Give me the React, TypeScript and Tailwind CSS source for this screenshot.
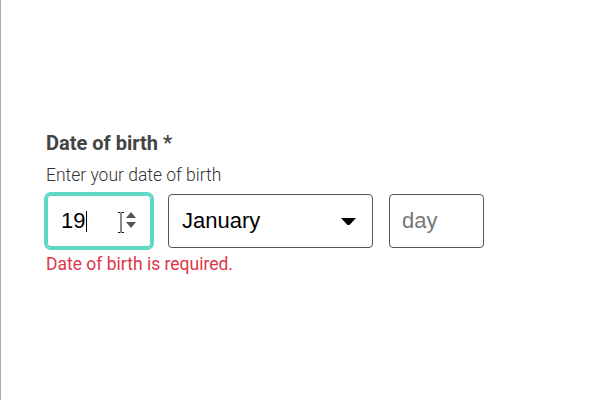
export default function App() {
  return (
    <div className="h-[400px] w-[599px] overflow-hidden border-l border-[#a8a8a8] bg-white">
      <div className="px-[45px] pt-[131px]" style={{ fontFamily: 'Roboto, "Liberation Sans", sans-serif' }}>
        <div className="text-[20px] font-bold leading-6 text-[#444]">Date of birth *</div>
        <div className="mt-[10px] text-[17.5px] font-light leading-5 text-[#333]">Enter your date of birth</div>

        <div className="mt-[9px] flex items-center gap-4" style={{ fontFamily: '"Liberation Sans", Arial, sans-serif' }}>
          <div className="relative flex h-[54px] w-[106px] items-center rounded-[5px] border-2 border-[#5ed8c4] pl-[13px] ring-2 ring-[#5ed8c4]">
            <span className="text-[22px] leading-none text-black">19</span>
            <span className="ml-px h-[21px] w-px bg-black" />
            <svg className="absolute left-[69px] top-[16px]" width="8" height="21" viewBox="0 0 8 21">
              <path d="M1 0.5h2.5M4.5 0.5H7M4 1v19M1 20.5h2.5M4.5 20.5H7" stroke="#111" strokeWidth="1" fill="none" />
            </svg>
            <svg className="absolute left-[78px] top-[16px]" width="10" height="17" viewBox="0 0 10 17">
              <path d="M5 0 L10 6 H0 Z" fill="#555" />
              <path d="M0 10 H10 L5 16 Z" fill="#555" />
            </svg>
          </div>

          <div className="flex h-[54px] w-[205px] items-center justify-between rounded-[4px] border border-[#555] pl-[13px] pr-[16px]">
            <span className="text-[22px] leading-none text-black">January</span>
            <svg width="15" height="7" viewBox="0 0 15 7">
              <path d="M0 0 H15 L8.5 7 H6.5 Z" fill="#000" />
            </svg>
          </div>

          <div className="flex h-[54px] w-[95px] items-center rounded-[4px] border border-[#555] pl-[12px]">
            <span className="text-[22px] leading-none text-[#777]">day</span>
          </div>
        </div>

        <div className="mt-[6px] text-[17.5px] leading-5 text-[#e0364a]">Date of birth is required.</div>
      </div>
    </div>
  )
}
